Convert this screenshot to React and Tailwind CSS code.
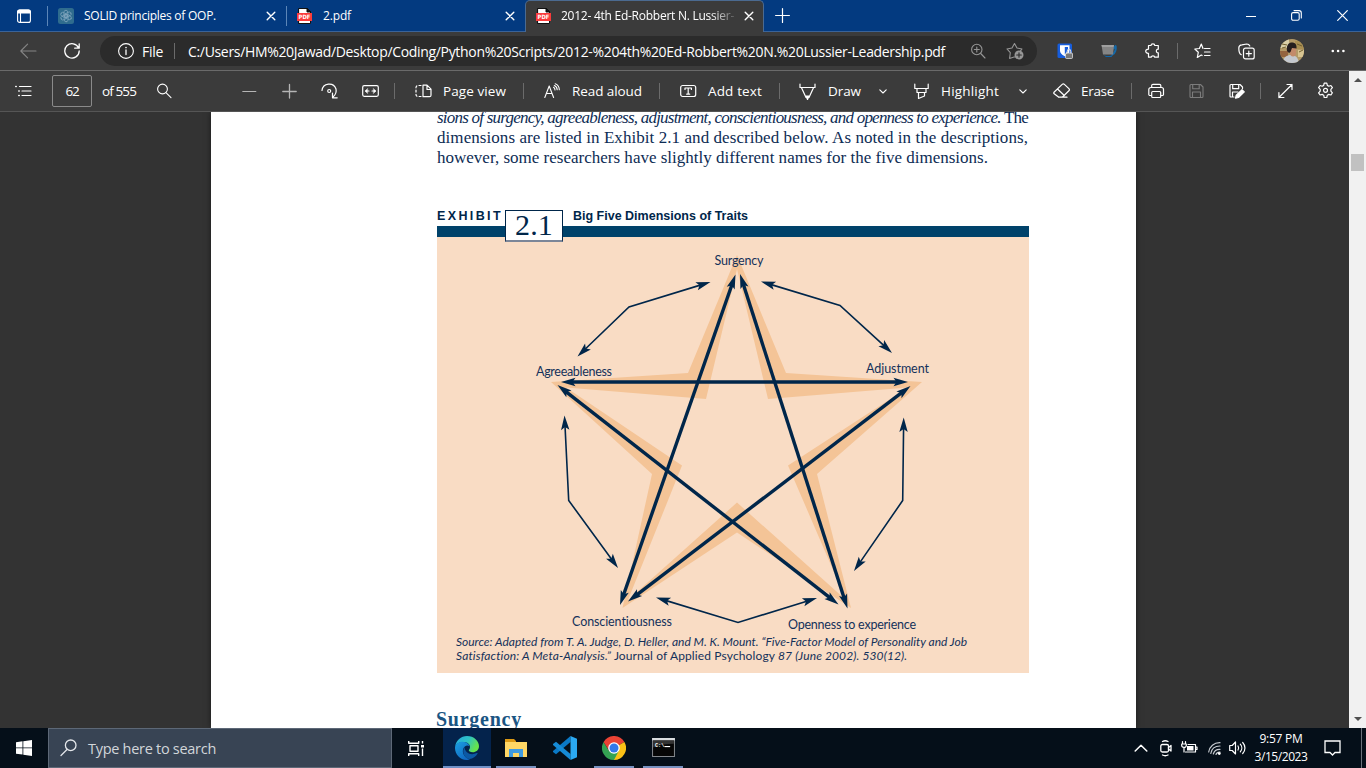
import React, { useLayoutEffect, useRef } from "react";

/* Text tracked so that it fills an exact measure. */
function Fit({ w, className = "", children }) {
  const ref = useRef(null);
  useLayoutEffect(() => {
    const el = ref.current;
    el.style.letterSpacing = "0px";
    const natural = el.getBoundingClientRect().width;
    el.style.letterSpacing = (w - natural) / el.textContent.length + "px";
  }, [w]);
  return (
    <span ref={ref} className={"inline-block shrink-0 whitespace-nowrap " + className}>
      {children}
    </span>
  );
}

function Svg({ w = 16, h = 16, className = "", sw = 1.1, children }) {
  return (
    <svg
      width={w}
      height={h}
      viewBox={`0 0 ${w} ${h}`}
      fill="none"
      stroke="currentColor"
      strokeWidth={sw}
      strokeLinecap="round"
      strokeLinejoin="round"
      className={"block shrink-0 " + className}
    >
      {children}
    </svg>
  );
}

const Close = ({ className }) => (
  <Svg w={10} h={10} sw={1.4} className={className}>
    <path d="M1.2 1.2 8.8 8.8M8.8 1.2 1.2 8.8" />
  </Svg>
);

const PdfIcon = ({ className }) => (
  <Svg w={15} h={16} className={className}>
    <path d="M2 .5h8L13.5 4v11.5H2z" fill="#fff" stroke="#111" strokeWidth="1" />
    <path d="M10 .5V4h3.500z" fill="#111" stroke="#111" strokeWidth="1" />
    <rect x="0" y="5" width="15" height="8" fill="#fb3b3b" stroke="none" />
    <text x="1.6" y="11.200" fontSize="5.8" fontWeight="700" fontFamily="DejaVu Sans" fill="#fff" stroke="none" textLength="11.8" lengthAdjust="spacingAndGlyphs">PDF</text>
  </Svg>
);

const Sep = ({ className }) => <div className={"w-px shrink-0 bg-[#6b6b6b] " + className} />;

const Chevron = ({ className }) => (
  <Svg w={8} h={5} sw={1.1} className={className}>
    <path d="M.8.800 4 4 7.200.8" />
  </Svg>
);

function TabBar() {
  return (
    <div className="flex h-8 shrink-0 items-center border-b border-[#3a6398] bg-[#033a80] text-[12px] text-white">
      <Svg className="ml-4">
        <rect x="1.600" y="2" width="12.800" height="12.400" rx="2" />
        <path d="M1.600 5V4a2 2 0 0 1 2-2h8.800a2 2 0 0 1 2 2v1z" fill="currentColor" />
        <path d="M4.500 5v9" />
      </Svg>
      <div className="ml-[15px] h-5 w-px bg-[#5c86b8]" />
      <Svg className="ml-[10px]">
        <rect width="16" height="16" rx="2.500" fill="#2f6c8e" stroke="none" />
        <g stroke="#7fa5bd" strokeWidth=".7">
          <rect x="5.800" y="2.300" width="4" height="7" rx="2" />
          <rect x="5.800" y="2.300" width="4" height="7" rx="2" transform="rotate(60 8 8)" />
          <rect x="5.800" y="2.300" width="4" height="7" rx="2" transform="rotate(120 8 8)" />
          <rect x="5.800" y="2.300" width="4" height="7" rx="2" transform="rotate(180 8 8)" />
          <rect x="5.800" y="2.300" width="4" height="7" rx="2" transform="rotate(240 8 8)" />
          <rect x="5.800" y="2.300" width="4" height="7" rx="2" transform="rotate(300 8 8)" />
        </g>
      </Svg>
      <Fit w={132} className="ml-[10px]">SOLID principles of OOP.</Fit>
      <Close className="ml-[50px]" />
      <div className="ml-[10px] h-5 w-px bg-[#5c86b8]" />
      <PdfIcon className="ml-[10px]" />
      <Fit w={28} className="ml-[11px]">2.pdf</Fit>
      <Close className="ml-[154px]" />
      <div className="-mb-px ml-[10px] flex h-8 w-[239px] shrink-0 items-center rounded-t-[5px] border-x border-t border-[#4b6a90] bg-[#3b3b3b] pb-[2px]">
        <PdfIcon className="ml-[10px]" />
        <div className="ml-[10px] w-[173px] overflow-hidden [mask-image:linear-gradient(to_right,black_150px,transparent_178px)]">
          <Fit w={173}>2012- 4th Ed-Robbert N. Lussier-</Fit>
        </div>
        <Close className="ml-[10px]" />
      </div>
      <Svg w={15} h={15} sw={1.200} className="ml-[11px]">
        <path d="M7.500.6v13.800M.6 7.500h13.800" />
      </Svg>
      <Svg w={10} h={10} sw={1} className="ml-[456px]"><path d="M0 5.500h10" /></Svg>
      <Svg w={11} h={11} sw={1.100} className="ml-[35px]">
        <rect x=".6" y="2.600" width="7.600" height="7.600" rx="1.500" />
        <path d="M3 .6h5a2.300 2.300 0 0 1 2.300 2.300V8" />
      </Svg>
      <Svg w={11} h={11} sw={1.200} className="ml-[35px]"><path d="M.7.700l9.600 9.600M10.300.700.700 10.300" /></Svg>
    </div>
  );
}

function AddressBar() {
  return (
    <div className="flex h-[39px] shrink-0 items-center border-b border-[#6a6a6a] bg-[#3b3b3b] text-[14px] text-white">
      <Svg w={17} className="ml-5 text-[#858585]"><path d="M16 8H.8M7.600 1.200.8 8l6.800 6.800" /></Svg>
      <Svg sw={1.300} className="ml-[27px]">
        <path d="M14.600 5A7.200 7.200 0 1 0 15.200 8M15.200.8V5.200H10.700" />
      </Svg>
      <div className="ml-5 flex h-[30px] w-[937px] shrink-0 items-center rounded-full bg-[#2b2b2b]">
        <Svg className="ml-[18px]">
          <circle cx="8" cy="8" r="7.400" />
          <path d="M8 7v4.500" strokeWidth="1.300" />
          <circle cx="8" cy="4.600" r=".8" fill="currentColor" stroke="none" />
        </Svg>
        <Fit w={21} className="ml-2">File</Fit>
        <Sep className="ml-[11px] h-4" />
        <Fit w={757} className="ml-[13px]">
          C:/Users/HM%20Jawad/Desktop/Coding/Python%20Scripts/2012-%204th%20Ed-Robbert%20N.%20Lussier-Leadership.pdf
        </Fit>
        <Svg className="ml-[25px] text-[#969696]">
          <circle cx="6.800" cy="6.500" r="5.200" />
          <path d="M10.700 10.500 15 15M6.800 4v5M4.300 6.500h5" />
        </Svg>
        <Svg w={18} h={18} className="ml-5 text-[#969696]">
          <path d="M9 15H8L3.600 16.400 4.300 10.700 1 7 6 6 8.500 1.500 11 6l5 1-1.500 1.800" />
          <circle cx="13" cy="13" r="4.500" fill="#969696" stroke="none" />
          <path d="M13 10.700v4.600M10.700 13h4.600" stroke="#2b2b2b" />
        </Svg>
      </div>
      <Svg className="ml-5" w={17} h={17}>
        <rect x=".5" y=".5" width="14.500" height="14.500" rx="1.500" fill="#175ddc" stroke="none" />
        <path d="M3 2.300h9.500v5.200c0 3-2.500 4.500-4.700 5.800C5.500 12 3 10.500 3 7.500z" fill="#fff" stroke="none" />
        <path d="M7.800 4H11v3.500c0 1.700-1.400 2.900-3.200 4z" fill="#175ddc" stroke="none" />
        <rect x="8.500" y="10" width="7" height="5.500" rx="1" fill="#777" stroke="#eee" strokeWidth=".7" />
        <path d="M10.200 9.800V8.300a1.800 1.800 0 0 1 3.600 0v1.500" stroke="#ddd" />
      </Svg>
      <Svg w={16} className="ml-[27px]">
        <path d="M12.500 5.500 14.500 3c.8 3-.4 7-3 8.500" stroke="#1368a8" strokeWidth="2" />
        <path d="M2 11.500c3 2 7 2 10 0l-1.500 2.500H5z" fill="#0f67ae" stroke="none" />
        <path d="M.5 2h12.500l-1 9.500H2z" fill="#858585" stroke="none" />
        <path d="M.5 2h12.500l-.5 2H1z" fill="#a0a0a0" stroke="none" />
      </Svg>
      <Svg className="ml-[28px]" sw={1.200}>
        <path d="M3.500 2.500H6C6 .3 9.800.300 9.800 2.500h3.500v3.700c-2.600-.3-2.600 4 0 3.700v4.300H9.700c0-1.700-3.500-1.700-3.500 0H3.500v-3.900C-.2 10.500-.2 6 3.500 6.200z" />
      </Svg>
      <Sep className="ml-4 h-4" />
      <Svg w={17} className="ml-4" sw={1.200}>
        <path d="M9 5.500 7.300 1 5.400 5.500.800 6l3.500 3.300-1 5.200L7.300 12l.8.500M10.500 5.500H16M10.500 9H16M10.500 12.500H16" />
      </Svg>
      <Svg w={17} h={17} className="ml-[27px]" sw={1.200}>
        <rect x="5.500" y="5.200" width="10.700" height="10.700" rx="2" />
        <path d="M10.800 8v5.200M8.200 10.600h5.200M3.300 11.700C1.500 11 .8 8 .800 5c0-2 1-3 3-3.200l5-.8c1.600 0 2.500.7 3 2" />
      </Svg>
      <svg width="24" height="24" viewBox="0 0 24 24" className="ml-[25px] block shrink-0">
        <clipPath id="face"><circle cx="12" cy="12" r="12" /></clipPath>
        <g clipPath="url(#face)">
          <rect width="24" height="24" fill="#b39a68" />
          <path d="M0 0h9v9H0z" fill="#d9cfa8" />
          <path d="M15 2h9v8h-9z" fill="#a88e52" />
          <path d="M0 12h8v6H0z" fill="#93643e" />
          <path d="M18 11h6v7h-6z" fill="#d8c592" />
          <path d="M2 5l5 1M17 5l5 2M2 9l4-1M19 13l4-2" stroke="#72602f" />
          <path d="M3 24c0-6 4-8 8-8s7 2 8 8z" fill="#c4c8ce" />
          <path d="M10 8h6v6c0 2-1 3.500-3 3.500S10 16 10 14z" fill="#c38b6b" />
          <path d="M7 12C6 6 9 3.500 12 3.500s5 2 4.500 6L12 9l-1.500 4L9 14z" fill="#251e1e" />
        </g>
      </svg>
      <Svg w={15} h={4} className="ml-[27px]">
        <g fill="currentColor" stroke="none"><circle cx="1.800" cy="2" r="1.300" /><circle cx="7.100" cy="2" r="1.300" /><circle cx="12.400" cy="2" r="1.300" /></g>
      </Svg>
    </div>
  );
}

function PdfToolbar() {
  return (
    <div className="flex h-[41px] shrink-0 items-center border-b border-[#555] bg-[#3b3b3b] text-[13.5px] text-white">
      <Svg w={17} className="ml-[15px]" sw={1.200}>
        <path d="M4.500 3.500H16M7 8h9M7 12.500h9" />
        <path d="M.8 3.500h.4M3.800 8h.4M3.800 12.500h.4" strokeWidth="1.600" />
      </Svg>
      <div className="ml-5 flex h-8 w-10 shrink-0 items-center justify-center rounded-[2px] border border-[#8a8a8a]">
        <Fit w={13}>62</Fit>
      </div>
      <Fit w={34} className="ml-[10px]">of 555</Fit>
      <Svg className="ml-5"><circle cx="6.500" cy="6" r="4.900" /><path d="M10.200 9.800 15 14.600" /></Svg>
      <Svg w={15} sw={1.200} className="ml-[70px] text-[#b5b5b5]"><path d="M.8 8.500h13" /></Svg>
      <Svg w={15} sw={1.300} className="ml-[25px] text-[#b5b5b5]"><path d="M.8 8.500h13.400M7.500 1.500v13.500" /></Svg>
      <Svg w={17} h={18} sw={1.200} className="ml-[24px]">
        <path d="M1 8.500A7.200 7.200 0 0 1 15 7c.8 3.600-.7 6-3 8M11.500 11v4.800h4.700" />
        <circle cx="8.200" cy="9" r="1.500" />
      </Svg>
      <Svg w={17} sw={1.200} className="ml-[24px]">
        <rect x=".7" y="2.700" width="15.600" height="10.600" rx="1.500" />
        <path d="M3.500 8h3.500M10 8h3.500" />
        <path d="M5.500 5.500 3 8l2.500 2.500zM11.500 5.500 14 8l-2.500 2.500z" fill="currentColor" strokeWidth=".3" />
      </Svg>
      <Sep className="ml-[15px] h-4" />
      <Svg w={17} sw={1.200} className="ml-5">
        <path d="M6 2.500H3a2 2 0 0 0-2 2v7a2 2 0 0 0 2 2h3" strokeDasharray="2 2.200" />
        <path d="M8 2.200h4l4 4v6a1.500 1.500 0 0 1-1.500 1.500H8zM12 2.500v4h4" />
      </Svg>
      <Fit w={63} className="ml-[11px]">Page view</Fit>
      <Sep className="ml-[17px] h-4" />
      <Svg w={17} h={17} sw={1.100} className="ml-[20px]">
        <path d="M.8 14.500 5.200 3l4.400 11.500M2.400 10.500h5.600M9.500 4.200c1 .5 1.500 1.500 1.500 2.800M10.300 2.500c2 .8 2.800 2.300 2.900 4.200M11.200.8c2.600 1 4 3 4.100 6" />
      </Svg>
      <Fit w={70} className="ml-[11px]">Read aloud</Fit>
      <Sep className="ml-[17px] h-4" />
      <Svg w={17} sw={1.200} className="ml-5">
        <rect x=".7" y="2.500" width="15" height="11" rx="2" />
        <path d="M5 6.500V5h6.400v1.500M8.200 5v6M6.700 11.200h3" />
      </Svg>
      <Fit w={54} className="ml-[11px]">Add text</Fit>
      <Sep className="ml-[17px] h-4" />
      <Svg w={17} h={17} sw={1.200} className="ml-[19px]">
        <path d="M1 1v3.500h15V1" />
        <path d="M2.500 4.800 7 14.500h3L14.500 4.800" />
        <path d="m7 13 1.500 3.500L10 13z" fill="currentColor" />
      </Svg>
      <Fit w={33} className="ml-[12px]">Draw</Fit>
      <Chevron className="ml-[18px]" />
      <Svg w={15} h={17} sw={1.200} className="ml-[27px]">
        <path d="M.8 1v4.500h13.400V1M3 5.800v3.700h9V5.800M4.500 9.700v5.800l6-2.500V9.700" />
      </Svg>
      <Fit w={58} className="ml-[12px]">Highlight</Fit>
      <Chevron className="ml-5" />
      <Svg w={18} sw={1.200} className="ml-[26px]">
        <path d="M1 9.300 9.200 1.400a1.600 1.600 0 0 1 2.200 0l4.500 4.200a1.600 1.600 0 0 1 0 2.200L9.500 14h-4L1.200 10.700a1 1 0 0 1-.2-1.400zM4.500 6l6.800 6.500M5.500 14.200H14" />
      </Svg>
      <Fit w={33} className="ml-[10px]">Erase</Fit>
      <Sep className="ml-[17px] h-4" />
      <Svg w={17} sw={1.200} className="ml-4">
        <path d="M3.500 12.500H2a1.200 1.200 0 0 1-1.200-1.300V6.500A2 2 0 0 1 2.800 4.500h10.700a2 2 0 0 1 2 2v4.700a1.200 1.200 0 0 1-1.200 1.300h-1.500M3.700 4.500V2.600c0-.8.5-1.300 1.300-1.300h6.500c.8 0 1.300.500 1.300 1.300v1.900" />
        <rect x="3.700" y="8.500" width="9" height="6" rx="1" />
      </Svg>
      <Svg w={15} sw={1.100} className="ml-6 text-[#7c7c7c]">
        <path d="M1 2.500c0-.6.4-1 1-1h9.500L14 4v9.500c0 .6-.4 1-1 1H2c-.6 0-1-.4-1-1zM3.700 1.700v4h6.500v-4M3.500 14.300V9h8v5.300" />
      </Svg>
      <Svg w={17} sw={1.200} className="ml-[25px]">
        <path d="M5 14H2c-.7 0-1-.4-1-1V2.500c0-.6.4-1 1-1h9L13.500 4v1.500M3.700 1.700v4h6v-4M3.500 13.800V9H9" />
        <path d="m6.500 15.200.8-3L13 6.700l2.300 2.200-5.800 5.600z" fill="currentColor" />
      </Svg>
      <Sep className="ml-[14px] h-4" />
      <Svg w={15} sw={1.200} className="ml-[17px]">
        <path d="M9 1.500h5v5M14 1.500.900 14.500M.900 9.500v5h5" />
      </Svg>
      <Svg w={18} h={18} sw={1.200} className="ml-6">
        <path d="M7.200 1.200h2.600l.5 2.200 1.500.8 2.100-.7 1.500 2.200-1.500 1.600v1.800l1.500 1.700-1.400 2.200-2.200-.6-1.500.8-.5 2.300H7.200l-.5-2.300-1.500-.8-2.100.6-1.500-2.200 1.600-1.700V7.300L1.600 5.700l1.500-2.200 2.100.7 1.500-.8z" />
        <circle cx="8.500" cy="8.300" r="2" />
      </Svg>
    </div>
  );
}

const INK = "#00264a";

/* Barbed arrow head whose tip is at (x, y), pointing away from (fx, fy). */
function Head({ x, y, fx, fy, len = 14.5, half = 4.2 }) {
  const deg = (Math.atan2(y - fy, x - fx) * 180) / Math.PI;
  return (
    <path
      d={`M0 0 L${-len} ${-half} L${-len + 3} 0 L${-len} ${half} Z`}
      transform={`translate(${x} ${y}) rotate(${deg})`}
      fill={INK}
    />
  );
}

function Arrow({ pts, width }) {
  const n = pts.length;
  const pull = ([x, y], [fx, fy]) => {
    const d = Math.hypot(fx - x, fy - y);
    return [x + ((fx - x) / d) * 9, y + ((fy - y) / d) * 9];
  };
  const line = [pull(pts[0], pts[1]), ...pts.slice(1, n - 1), pull(pts[n - 1], pts[n - 2])];
  return (
    <g>
      <polyline points={line.map((p) => p.join(",")).join(" ")} fill="none" stroke={INK} strokeWidth={width} />
      <Head x={pts[0][0]} y={pts[0][1]} fx={pts[1][0]} fy={pts[1][1]} />
      <Head x={pts[n - 1][0]} y={pts[n - 1][1]} fx={pts[n - 2][0]} fy={pts[n - 2][1]} />
    </g>
  );
}

const THICK = [
  [[735.5, 274.500], [620, 605]],
  [[740, 274], [847.5, 608.5]],
  [[561, 382], [908, 382]],
  [[557.5, 385], [838.5, 604.500]],
  [[910.5, 386], [628, 601.5]],
];
const THIN = [
  [[577.5, 356.5], [629, 307], [710.5, 282]],
  [[761, 281.5], [840, 305.5], [892, 353]],
  [[564.5, 415.5], [568.700, 500.500], [618, 568]],
  [[903.700, 417.5], [902.700, 500.500], [854, 571]],
  [[656, 597.5], [738, 622.500], [817, 598]],
];
const LABELS = [
  ["Surgency", 714.500, 264.5, 49],
  ["Agreeableness", 536, 375.5, 76],
  ["Adjustment", 866, 372.5, 63],
  ["Conscientiousness", 572, 625.5, 100],
  ["Openness to experience", 788, 628.5, 128],
];

function Diagram() {
  return (
    <svg width="592" height="398" viewBox="437 237 592 398" className="block">
      <path
        fillRule="evenodd"
        fill="#f4c497"
        d="M737 255 786 373 922 382 817 474 851 608 737 532.500 622.500 608 652 474 551 382 688 373Z
           M737 269 706 399 566 387.500 682 465.500 628 600 737 502.500 846 600 788 465.500 908 387.500 768 399Z"
      />
      {THIN.map((p, i) => <Arrow key={i} pts={p} width={1.6} />)}
      {THICK.map((p, i) => <Arrow key={i} pts={p} width={3.4} />)}
      <g fontFamily="Lato" fontSize="12.500" fill="#14315a">
        {LABELS.map(([t, x, y, w]) => (
          <text key={t} x={x} y={y} textLength={w} style={{ fontVariantLigatures: "none" }}>{t}</text>
        ))}
      </g>
    </svg>
  );
}

function Page() {
  return (
    <div className="flex h-full w-[925px] shrink-0 flex-col overflow-hidden bg-white pl-[226px] text-[#0d2c54] shadow-[0_0_6px_rgba(0,0,0,0.5)]">
      <div className="-mt-[4px] flex w-[600px] flex-col items-start font-['Liberation_Serif',serif] text-[17px] leading-5">
        <Fit w={591} className="h-5"><i>sions of surgency, agreeableness, adjustment, conscientiousness, and openness to experience.</i> The</Fit>
        <Fit w={591} className="h-5">dimensions are listed in Exhibit 2.1 and described below. As noted in the descriptions,</Fit>
        <Fit w={551} className="h-5">however, some researchers have slightly different names for the five dimensions.</Fit>
      </div>
      <div className="relative mt-[40px] flex h-[18px] w-[592px] shrink-0 items-center font-['Liberation_Sans',sans-serif] text-[12.5px] leading-4 font-bold text-[#00264a]">
        <Fit w={66} className="mb-0.5">EXHIBIT</Fit>
        <Fit w={175} className="mb-0.5 ml-[70px]">Big Five Dimensions of Traits</Fit>
        <div className="absolute top-[2px] left-[68px] flex h-8 w-[58px] items-center justify-center border border-b-2 border-[#00264a] border-b-[#7c8698] bg-white pb-0.5 font-['Liberation_Serif',serif] text-[30px] font-normal">
          <Fit w={38}>2.1</Fit>
        </div>
      </div>
      <div className="h-[11px] w-[592px] shrink-0 bg-[#00426a]" />
      <div className="h-[436px] w-[592px] shrink-0 bg-[#f9dcc4]">
        <Diagram />
        <div className="flex flex-col items-start pl-[19px] font-['Lato',sans-serif] text-[12px] leading-[14px] text-[#14315a] italic">
          <Fit w={511}>Source: Adapted from T. A. Judge, D. Heller, and M. K. Mount. “Five-Factor Model of Personality and Job</Fit>
          <Fit w={451}>Satisfaction: A Meta-Analysis.” <span className="not-italic">Journal of Applied Psychology</span> 87 (June 2002). 530(12).</Fit>
        </div>
      </div>
      <div className="-ml-px pt-[35px] font-['Liberation_Serif',serif] text-[20px] leading-[22px] font-bold text-[#1b5583]">
        <Fit w={86}>Surgency</Fit>
      </div>
    </div>
  );
}

function Scrollbar() {
  return (
    <div className="flex w-[17px] shrink-0 flex-col items-center bg-[#f1f1f1]">
      <Svg w={8} h={4} className="mt-[7px] text-[#505050]"><path d="M0 4 4 0l4 4z" fill="currentColor" stroke="none" /></Svg>
      <div className="mt-[72px] h-[17px] w-[13px] bg-[#c1c1c1]" />
      <Svg w={8} h={4} className="mt-auto mb-[7px] text-[#505050]"><path d="M0 0h8L4 4z" fill="currentColor" stroke="none" /></Svg>
    </div>
  );
}

function Taskbar() {
  return (
    <div className="flex h-10 shrink-0 items-center bg-[#050f19] text-white">
      <svg width="16" height="16" viewBox="0 0 16 16" fill="#fff" className="ml-4 block shrink-0">
        <path d="M0 2.200 6.500 1.300V7.500H0zM7.300 1.200 16 0v7.500H7.300zM0 8.300h6.500v6.300L0 13.700zM7.300 8.300H16V16l-8.700-1.300z" />
      </svg>
      <div className="ml-4 flex h-10 w-[344px] shrink-0 items-center border border-[#5d6877] bg-[#384454]">
        <Svg w={18} h={18} sw={1.300} className="ml-[11px] text-[#e4e7ea]">
          <circle cx="10.700" cy="6.300" r="5.300" /><path d="M7 10.500 1 16.500" />
        </Svg>
        <Fit w={128} className="ml-[10px] pt-px text-[14.5px] text-[#d2d6da]">Type here to search</Fit>
      </div>
      <Svg w={17} h={17} sw={1.400} className="ml-4">
        <path d="M.7 1v2.300h10V1M.7 16v-2.300h10V16M2 5.700h8v5.600H2zM14.500 1v2.500M14.500 8.500V16" strokeLinecap="butt" />
        <rect x="13" y="5" width="3" height="2.500" fill="currentColor" stroke="none" />
      </Svg>
      <div className="ml-[18px] flex h-10 w-12 shrink-0 items-center justify-center border-b-2 border-[#6f90c6] bg-[#04234c] pt-0.5">
        <svg width="24" height="24" viewBox="0 0 24 24">
          <defs>
            <linearGradient id="e1" x1="0" y1="0" x2="1" y2=".4"><stop offset="0" stopColor="#27a9df" /><stop offset=".55" stopColor="#2dc2c5" /><stop offset="1" stopColor="#66e44b" /></linearGradient>
            <linearGradient id="e2" x1="0" y1="0" x2=".7" y2="1"><stop offset="0" stopColor="#1ba0e2" /><stop offset="1" stopColor="#1067c0" /></linearGradient>
          </defs>
          <path d="M.2 10.500C1 4.500 6 0 12 0c7 0 12 5 12 10.200 0 3.800-3 6-6.200 6-2.800 0-4-1-4-1.900 0-.8 1.200-1.200 1.200-3.300 0-2.700-2.800-5-6.500-5C4 6 1.200 8 .2 10.500z" fill="url(#e1)" />
          <path d="M0 12c0-4 4-6.500 8-6.200 3.500.2 6 2.300 6.400 4.400C12.500 8.600 9 10 8 13.500c-1 4.500 2.500 9 7 9.500-1 .6-2 1-3.500 1C5 23.800 0 18.500 0 12z" fill="url(#e2)" />
          <path d="M9.500 11C6.500 16 9 22 14.500 23c3.500-.5 6.300-2.500 8-5.300.3-.5-.2-.9-.7-.6-5.800 2.600-11.800.3-12.300-6.100z" fill="#0c59a4" />
        </svg>
      </div>
      <div className="ml-[5px] flex h-10 w-10 shrink-0 items-center justify-center border-b-2 border-[#7791c0] pt-px">
        <svg width="22" height="18" viewBox="0 0 22 18">
          <path d="M0 0h9l2 2v4H0z" fill="#dd9a14" />
          <path d="M0 3h22v15H0z" fill="#ffd765" />
          <path d="M4 10h14v8h-4v-4H8v4H4z" fill="#3f9be0" />
        </svg>
      </div>
      <svg width="24" height="24" viewBox="0 0 24 24" className="ml-[17px] block shrink-0">
        <path d="M17.500 0v6L3 18.200 0 16v-.9z" fill="#0a79c6" />
        <path d="M17.500 24v-6L3 5.800 0 8v.9z" fill="#168bd6" />
        <path d="M17.500 0 24 2.800v18.400L17.500 24c.5-.3 0-1 0-1z" fill="#2ba9f2" />
      </svg>
      <div className="ml-[17px] flex h-10 w-10 shrink-0 items-center justify-center border-b-2 border-[#7791c0] pt-0.5">
        <svg width="24" height="24" viewBox="0 0 24 24">
          <path d="M12 12 1.600 6A12 12 0 0 1 22.400 6z" fill="#ea4335" />
          <path d="M12 12 22.400 6A12 12 0 0 1 12 24z" fill="#fbc116" />
          <path d="M12 12 16.700 15 12 24A12 12 0 0 1 1.600 6L7.200 15z" fill="#34a353" />
          <path d="M12 6h10.400L12 6z M1.600 6 7 14.500 12 6z" fill="#ea4335" />
          <circle cx="12" cy="12" r="5.800" fill="#fff" />
          <circle cx="12" cy="12" r="4.500" fill="#3379ea" />
        </svg>
      </div>
      <div className="ml-[9px] flex h-10 w-10 shrink-0 items-center justify-center border-b-2 border-[#7791c0] pt-px">
        <svg width="23" height="19" viewBox="0 0 24 20">
          <rect x=".5" y=".5" width="23" height="19" fill="#060606" stroke="#8b8f94" />
          <path d="M0 0h24v2.500H0z" fill="#d8dcdf" />
          <path d="M1 10C8 7 15 6 23 6V3H1z" fill="#333" />
          <text x="3" y="9" fontSize="5.500" fontWeight="700" fontFamily="Liberation Mono" fill="#fff">C:\</text>
          <path d="M13 9h6" stroke="#fff" strokeWidth="1.200" />
        </svg>
      </div>
      <Svg w={14} h={8} sw={1.500} className="ml-[451px]"><path d="M1.200 7 7 1.200 12.800 7" /></Svg>
      <Svg w={13} h={17} sw={1.300} className="ml-[12px]">
        <rect x=".8" y="4.500" width="7.700" height="7.500" rx="1.500" />
        <path d="M8.500 7.500 11 5.500v5.500l-2.500-2M2.500 1.500c1.500-.8 4-.8 5.500 0M2.500 15c1.500.8 4 .8 5.500 0" />
      </Svg>
      <Svg w={17} h={16} sw={1.200} className="ml-2">
        <path d="M1.500 1.500V4M4.500 1.500V4M.7 4h4.600v1.500C5.300 8 .7 8 .7 5.500zM3 7.500V12" />
        <path d="M7 4.500h7.500v7.500H4.500M14.500 7h1.500v2.500h-1.500" />
        <rect x="6" y="6" width="6.500" height="4.500" fill="currentColor" stroke="none" />
      </Svg>
      <Svg w={15} h={15} sw={1.200} className="ml-[10px]">
        <g className="text-[#c6cacf]"><path d="M.7 11C1.500 5.500 6 1.500 12 1.700M2.800 12.500C3.500 8 7 5 12 5M5.300 13C6 10.200 8.500 8.200 12 8.300M8 13.500c.5-1.500 2-2.400 4-2.300" /></g>
        <circle cx="11.300" cy="12.600" r="1.400" fill="currentColor" stroke="none" />
      </Svg>
      <Svg w={18} h={16} sw={1.200} className="ml-[6px]">
        <path d="M.7 5.500h2.500L6.500 2v12L3.200 10.500H.7zM9 6c.8 1.200.8 2.800 0 4M11.300 4.200c2 2.200 2 5.400 0 7.600M13.700 2.500c3 3.200 3 7.800 0 11" />
      </Svg>
      <div className="ml-2 flex w-[52px] shrink-0 flex-col items-center text-[12px] leading-[18px]">
        <Fit w={43}>9:57 PM</Fit>
        <Fit w={53}>3/15/2023</Fit>
      </div>
      <Svg w={18} h={18} sw={1.300} className="ml-[17px]">
        <path d="M1 2h15v11.500H11L8.500 16 6 13.500H1z" strokeLinejoin="miter" />
      </Svg>
      <div className="ml-[19px] h-10 w-px bg-[#6a727b]" />
    </div>
  );
}

export default function App() {
  return (
    <div className="flex h-[768px] w-[1366px] flex-col overflow-hidden bg-[#333] font-['Open_Sans','Noto_Sans',sans-serif]">
      <TabBar />
      <AddressBar />
      <div className="flex h-[657px] shrink-0">
        <div className="flex w-[1349px] flex-col">
          <PdfToolbar />
          <div className="flex h-[616px] overflow-hidden bg-[#333] pl-[211px]">
            <Page />
          </div>
        </div>
        <Scrollbar />
      </div>
      <Taskbar />
    </div>
  );
}
